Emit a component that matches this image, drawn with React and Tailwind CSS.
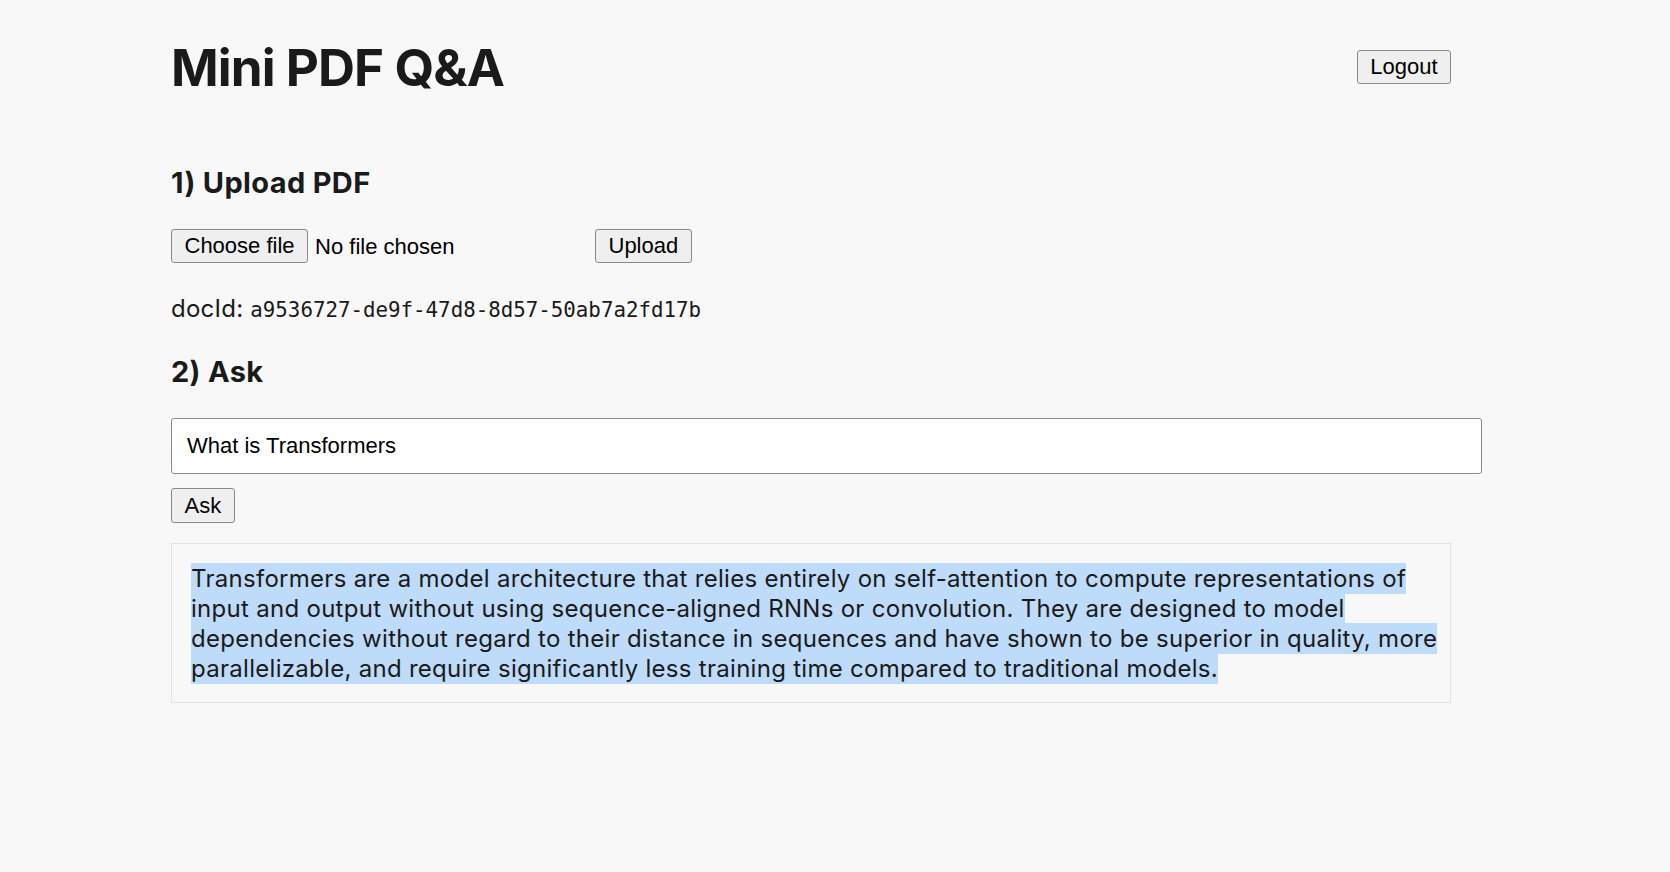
import React, { useState } from "react";

const ANSWER =
  "Transformers are a model architecture that relies entirely on self-attention to compute representations of input and output without using sequence-aligned RNNs or convolution. They are designed to model dependencies without regard to their distance in sequences and have shown to be superior in quality, more parallelizable, and require significantly less training time compared to traditional models.";

const btn =
  "h-[34px] px-[12.5px] rounded-[3px] border border-[#8a8a8a] bg-[#efefef] text-[22px] leading-none text-black font-['Liberation_Sans',Arial,sans-serif]";

export default function App() {
  const [question, setQuestion] = useState("What is Transformers");

  return (
    <div className="min-h-screen bg-[#f8f8f8] text-[#1a1a1a] font-['Inter',sans-serif] pl-[171px] pt-[39px]">
      <div className="w-[1280px]">
        {/* Header */}
        <div className="flex items-center justify-between h-[56px]">
          <h1 className="text-[51.2px] leading-[56px] font-bold tracking-[-0.018em]">
            Mini PDF Q&amp;A
          </h1>
          <button className={btn}>Logout</button>
        </div>

        {/* Upload */}
        <h2 className="mt-[70px] text-[29px] leading-[36px] font-bold tracking-[0.012em]">
          1) Upload PDF
        </h2>
        <div className="mt-[28px] flex items-center">
          <div className="w-[418px] flex items-center">
            <button className={btn}>Choose file</button>
            <span className="ml-[7px] text-[22px] text-black font-['Liberation_Sans',Arial,sans-serif]">
              No file chosen
            </span>
          </div>
          <button className={`${btn} ml-[6px]`}>Upload</button>
        </div>

        <div className="mt-[31px] text-[24px] leading-[30px] tracking-[0.01em]">
          docId:{" "}
          <code className="text-[20.8px] tracking-normal font-['DejaVu_Sans_Mono',monospace]">
            a9536727-de9f-47d8-8d57-50ab7a2fd17b
          </code>
        </div>

        {/* Ask */}
        <h2 className="mt-[29px] text-[29px] leading-[36px] font-bold tracking-[0.012em]">2) Ask</h2>
        <input
          value={question}
          onChange={(e) => setQuestion(e.target.value)}
          className="mt-[28px] block w-[1311px] h-[56px] px-[15px] rounded-[3px] border border-[#8a8a8a] bg-white text-[22px] text-black outline-none font-['Liberation_Sans',Arial,sans-serif]"
        />
        <button className={`${btn} mt-[14px] h-[35px]`}>Ask</button>

        <div className="mt-[20px] border border-[#e2e2e2] pl-[19px] pr-[8px] pt-[20px] pb-[18px] text-[24px] leading-[30px] tracking-[0.012em]">
          <span className="bg-[#bfdbfa] py-[1px] box-decoration-clone">{ANSWER}</span>
        </div>
      </div>
    </div>
  );
}
